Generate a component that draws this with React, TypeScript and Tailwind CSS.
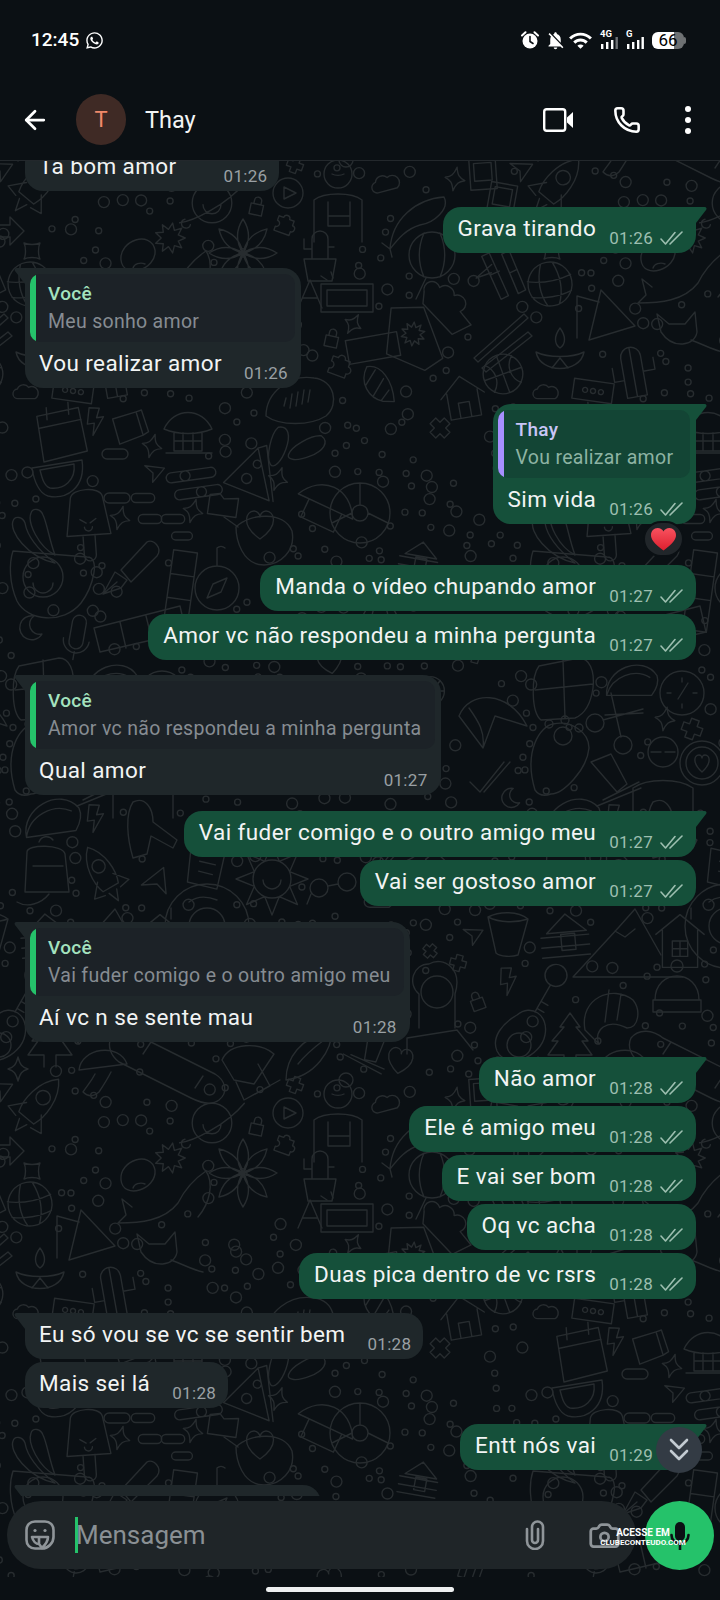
import { ArrowLeft, Camera, Phone } from "lucide-react";
import { FaWhatsapp } from "react-icons/fa";
import { MdNotificationsOff, MdWifi } from "react-icons/md";

const c = (x: number, y: number, r: number) =>
  `M${x - r} ${y}a${r} ${r} 0 1 0 ${2 * r} 0a${r} ${r} 0 1 0 ${-2 * r} 0`;

const petals = (n: number, len: number, w: number) =>
  Array.from({ length: n }, (_, i) => {
    const a = (i * 2 * Math.PI) / n;
    const ex = Math.cos(a) * len;
    const ey = Math.sin(a) * len;
    const nx = -Math.sin(a) * w;
    const ny = Math.cos(a) * w;
    return `M0 0Q${ex / 2 + nx} ${ey / 2 + ny} ${ex} ${ey}Q${ex / 2 - nx} ${ey / 2 - ny} 0 0`;
  }).join("");

const burst = (n: number, r1: number, r2: number) =>
  "M" +
  Array.from({ length: n * 2 }, (_, i) => {
    const a = (i * Math.PI) / n;
    const r = i % 2 ? r2 : r1;
    return `${(Math.cos(a) * r).toFixed(1)} ${(Math.sin(a) * r).toFixed(1)}`;
  }).join("L") +
  "Z";

// doodle shapes, drawn around 0,0 in a box of about 40px
const shapes: Record<string, string> = {
  sparkle: "M0-12C2-4 4-2 10 0C4 2 2 4 0 12C-2 4-4 2-10 0C-4-2-2-4 0-12Z",
  plane: "M-14-7L14-11L3 13L0 0Z",
  cloud: "M-11 7a6 6 0 0 1-1-12a8 8 0 0 1 14-2a7 7 0 0 1 8 14z",
  lock: "M-7-2h14v12h-14zM-4-2v-4a4 4 0 0 1 8 0v4",
  puzzle: "M-10-6h6a4 4 0 0 1 8 0h6v6a4 4 0 0 1 0 8v5h-20v-5a4 4 0 0 0 0-8z",
  pill: "M-8-5h16a5 5 0 0 1 0 10h-16a5 5 0 0 1 0-10z",
  heart: "M0 14C-20 0-14-14-6-14C-2-14 0-11 0-8C0-11 2-14 6-14C14-14 20 0 0 14Z",
  bolt: "M-4-14L6-12L2-3L9-3L-4 14L-1 2L-8 2Z",
  moon: "M4-12A12 12 0 1 0 12 6A10 10 0 0 1 4-12Z",
  burst: burst(9, 19, 11),
  flower: petals(8, 34, 11) + c(0, 0, 4),
  sun: c(0, 0, 19) + "M-9 1a9 9 0 0 0 18 0" + burst(8, 36, 19),
  rocket:
    "M0-28C12-16 12 4 8 14H-8C-12 4-12-16 0-28Z" + c(0, -8, 6) + "M-8 4L-18 16L-8 18M8 4L18 16L8 18M-4 18L0 28L4 18",
  globe: c(0, 0, 22) + "M-22-6C-8-2 8-2 22-6M-20 10C-8 14 8 14 20 10M-6-21C-12-6-12 8-6 21M6-21C12-6 12 8 6 21",
  ball: c(0, 0, 18) + "M-18 0H18M0-18V18M-13-13C-5-6-5 6-13 13M13-13C5-6 5 6 13 13",
  house: "M-20-2L0-20L20-2M-14-6V18H14V-6M-5 18V4H5V18",
  hut: "M-24 0C-14-22 14-22 24 0C10 6-10 6-24 0ZM-14 4V22H14V4M-14 12H14M-5 4V22M5 4V22M-22 24H24",
  polaroid: "M-12-14H12V14H-12ZM-8-10H8V6H-8Z",
  koi: "M-30 30C-28 0-4-20 24-22C30-10 14 4 0 6C-14 10-22 20-30 30ZM-30 30L-38 24M-30 30L-28 38",
  lantern: c(0, 0, 23) + "M-8-22C-14-8-14 8-8 22M8-22C14-8 14 8 8 22M-6 23L-16 44",
  bamboo: "M-14-22L-4 24L4 22L-6-24ZM6-20L14 22L22 20L14-22ZM-9-2L0-4M10 0L18-2M-6-12L-24-2L-8-4",
  whale: "M-38 14L-48 6L-44 22L-52 30C-30 30-6 28 8 10C14-2 24-14 36-22C44-10 40 10 28 24",
  cone: "M-30 20V-22L-8-16M-18 22L-6-28L28 8Z",
  handheart: "M-30-12a8 8 0 0 1 14-8a9 9 0 0 1 16 4a8 8 0 0 1 10 14L24 8L8 22L-28 0Z",
  chop: "M-26 24L24-20L28-16L-22 28ZM-18 34L28-2L32 2L-14 38Z",
  sunlantern: "M-16-30L16-24L24 30L4 38L-30 14ZM-2 8" + burst(10, 12, 7),
  diya: "M-24-2C-20 20 20 20 24-2C12 4-12 4-24-2ZM0-6C-6-10-6-18 0-26C6-18 6-10 0-6ZM-8 14L0 4L8 14",
  fox: "M-22-6L-26-24L-14-14H2L12-26L14-6C12 8-10 12-22-6ZM8 2C24 8 30 12 40 14",
  cactus: "M-10 26V-14a10 10 0 0 1 20 0V26ZM-10 8H-20V-6M10 2H22V-10M0-24V26",
  shell: "M-20-12C-6-20 12-8 22 14L10 18C-6 20-22 8-20-12ZM-10-12L-14 8M2-6L-2 16M12 4L8 18",
  dots: "M-20-10H20V10H-20Z" + c(-8, 0, 2.5) + c(0, 0, 2.5) + c(8, 0, 2.5),
  stars: "M-26-12H26V12H-26Z",
  grandma:
    c(0, -22, 14) + c(8, -36, 7) + "M-6-22a8 4 0 0 0 12 0M-24 46V4C-14-4 14-4 24 4V46M-10 6V30H12V6M-10 20H12",
  potcactus: "M-16 8H16L12 30H-12ZM-8 8V-12a8 8 0 0 1 16 0V8M-8-2H-16V-12M8-4H14",
  clock: "M-26-14H26V14H-26ZM-20-8H20V8H-20ZM-26-22L-20-18M-16-26L-14-20",
  letterA: "M-12 14L0-14L12 14M-7 4H7",
  hutthick: "M-30 6C-16-22 16-22 30 6ZM-18 6V26H18V6",
  wave: "M-34 18C-34-6-10-24 14-20C34-18 40 6 26 18C10 28-20 28-34 18ZM-16 8L-14 0M-10 10L-8-4M-4 8L-2-6M2 6L4-8M8 4L10-8",
  calendar: "M-20-18L22-24L28 20L-16 28ZM-10-26V-14M12-30V-18M-18-6L24-12",
  jar: "M-16-10L10-18L18 8L-8 18ZM10-18L16-20L24 4L18 8",
  slider: "M-20-12H20a5 5 0 0 1 0 10H-20a5 5 0 0 1 0-10Z" + c(-6, -7, 5) + "M-14 6H24a5 5 0 0 1 0 10H-14a5 5 0 0 1 0-10Z" + c(8, 11, 5),
  watermelon: "M-26-8L24-16C28 12 8 24-10 20C-18 18-24 6-26-8ZM-18-6L16-12C18 4 6 14-8 12C-14 10-16 2-18-6Z",
  flipflop: "M-6-20C4-24 8-14 6 0C4 14-2 22-6 18C-12 12-12-12-6-20Z",
  pizza: "M-24 16L4-24L24 26ZM4-24L12-28L28 26" + c(-2, 8, 5) + c(6, -8, 4),
  popsicle: "M-16-24C-14-34 14-34 16-24L22 14H-22ZM-6 14V34a6 6 0 0 0 12 0V14M-8-2L-2 2M8-2L2 2M-4 6a4 4 0 0 0 8 0",
  chili: "M-20-10C-24 0-6 26 22 32C4 18-6 4-8-8C-10-14-18-16-20-10ZM-2-18C-6-8 6 16 22 24C16 8 14-8 10-16C8-22 0-24-2-18Z",
  folder: "M-12-8L-4-10L0-6L12-8V8H-12Z",
  teapot: "M-24-4C-10-18 24-20 32 0C36 20 20 34 4 34C-18 34-24 8-24-4ZM-36-14L-22-4" + "M0 8C-20-6-14-20-6-20C-2-20 0-16 0-14C0-16 2-20 6-20C14-20 20-6 0 8Z",
  wheel: c(0, 0, 30) + c(0, 0, 8) + "M0-8V-30M8 0L28 10M-8 0L-28 10",
  pen: "M-30 30L-18 8L-6 16L-12 24ZM-12 6L14-22C20-26 30-16 24-8L-2 18ZM-30 30L-16 18",
  crossT: "M-12-40H12V40H-12ZM-12-16H12M-12 8H12",
  compass: c(0, 0, 22) + "M-10 10L-4-4L10-10L4 4ZM0-22V-40a6 6 0 0 1 8 0",
  smilecup: "M-44-30L30-24C44-24 36 6 24 22C6 44-30 40-40 20C-48 2-48-18-44-30Z" + c(-14, -4, 20) + "M-24 2a10 10 0 0 0 20 0",
  crossword: "M-46 10L40-12L46 14L-40 34ZM-20 4L-14 30M6-2L12 22",
  mic: "M-7-14a7 7 0 0 1 14 0V6a7 7 0 0 1-14 0ZM-13 4a13 13 0 0 0 26 0M0 16V24",
  calc: "M-24-22L16-30C26-30 32-18 30 0C28 14 22 26 12 30L-22 32C-32 24-32-12-24-22ZM-28 2L30-4M0-28L2 30",
  gauge: c(0, 0, 22) + "M-4 6L6-10M-15 0H-11M0-15V-11M15 0H11M0 15V11",
  scissors: c(-18, 2, 9) + c(10, 24, 9) + "M-10-1L30-12M8 16L-2-28M-8-6L30-8",
  helmet: "M-34-8C-24-34 16-34 34 2L2-8L-10 24L-34-8ZM-24-16C-14-2-8 8-10 24",
  paw: "M-22 36C-34-4-16-28-4-30C14-34 32-22 32-6C30 16 6 40-6 40C-12 42-18 42-22 36Z" + c(6, -18, 9) + c(-8, -30, 4) + c(8, -34, 4) + c(22, -26, 4),
  tube: "M-14-12L6-20L22 10L12 18ZM-2 26L34 8M-8 32L36 14",
  man: c(0, -22, 15) + "M-12-22H-2M2-22H12M-30 44V14C-16 4 16 4 30 14V44",
  ringheart: c(0, 0, 22) + c(0, 0, 16) + "M0 9C-10 0-8-8-3-8C-1-8 0-6 0-5C0-6 1-8 3-8C8-8 10 0 0 9Z",
  checks: "M-20 8L-10 18L14-12M-6 18L20-12",
  cabin: "M-20-6L0-24L20-6ZM-26-2H22M-26 8H22M-26 18H22M-6-4H8V12H-6Z",
  flowerpot: "M-20-16C-8-22 10-22 20-14L10 22C4 24-8 24-12 20ZM-20-16C-8-10 8-10 20-14",
  mountain: "M-50 36L-4-14L12-32L38 14M-8-10L2-4L12-12M-50 36H60",
  cottage: "M-22-6L0-24L22-6M-16-10V24H16V-10M-7 0H7V14H-7ZM0 0V14M-7 7H7M10-20V-30",
  girl: "M-18 30V-4C-30-14-24-34-8-34C6-42 26-30 18-4V30" + c(0, -6, 16) + "M-30 56V40L20 32L36 52",
  beanie: "M-22 12C-22-20 22-20 22 12ZM-24 12H24V24H-24Z" + c(0, -22, 6),
  shrimp: "M-28 16C-34-16 0-30 20-14C28-4 26 14 14 14C-6 4-20 16-14 30L-28 16ZM-4-24L-8 8M8-20L4 6",
  avocado: "M-20 20C-26 6-14-8 0-16C14-28 32-16 28 4C24 26-10 40-20 20Z" + c(2, 14, 12),
  tree: "M-6 26V14H-22L-12 0H-18L-6-14H-10L0-28L10-14H6L18 0H12L22 14H6V26",
  key: c(0, -18, 11) + "M0-7V24M0 12H8M0 20H8",
  taco: "M-26 16C-28-14 14-30 30-6C32 0 30 8 24 16ZM-26 16C-20-6 6-14 22-4",
  flight: "M-14-26C-2-32 6-20 6-6L30 12L26 20L4 8L0 26L-14 30C-20 10-22-14-14-26Z",
  backpack: "M-20-16C-20-24 16-24 18-14L22 24H-22ZM-14-2H16M-8-26a8 8 0 0 1 14-2M-30 34C-20 40-6 36 2 26",
  paper: "M-18-18L16-14L12 20L-18 16ZM-8-6L8-4M-8 4L6 6",
  glasses: c(-14, 0, 9) + c(14, -6, 9) + "M-5-2L5-4M-22 6L-26 16",
  donut: c(0, 0, 42) + c(0, 0, 18) + "M-18-24C-10-30 0-30 10-26",
  mushroom: "M-24 2C-22-20 16-26 24-4ZM-8 6C-12 14-16 18-20 24C-14 30-8 28-4 24C0 18 4 12 8 4",
  snowboard: "M-62-26C-54-36-40-34-30-26L42 10C52 16 56 28 46 36C38 42 26 38 18 34L-54-2C-62-8-66-18-62-26ZM-30-10L-22-22M30 12L22 24",
  drum: "M-28-8C-20-26 10-26 24-14L4 16L-16 12ZM-14 14L-6 32L20 18L8-4M-6 32L30 12",
  surf: "M-24 26C-24 4-10-16 22-24C22-4 6 22-24 26ZM-12 10C-4 0 6-8 14-14",
  arrow: "M-16-6H0V-14L14 0L0 14V6H-16Z",
  egg: "M-16 6C-18-14 14-24 18-4C20 16-14 26-16 6ZM-4 14a8 6 0 0 1 12-4",
  square: "M-8-8C-4-6 4-6 8-8C6-4 6 4 8 8C4 6-4 6-8 8C-6 4-6-4-8-8Z",
  playc: c(0, 0, 15) + "M-4-6L8 0L-4 6Z",
  cross: "M-4-10H4V-4H10V4H4V10H-4V4H-10V-4H-4Z",
  planet: c(0, 0, 22) + "M-10 2a10 10 0 0 0 20 0M-36 22C-20 20 16 2 36-22M-30 18a5 5 0 1 0 6 6",
};

// [shape, x, y, scale, rotation]
const doodles: [string, number, number, number, number][] = [
  ["cloud", 387, 183, 0.9, -15], ["sparkle", 455, 178, 1, 10], ["polaroid", 483, 173, 1.1, -4], ["polaroid", 502, 198, 1.1, 10],
  ["plane", 0, 170, 0.8, 10], ["rocket", 37, 184, 1.2, 40], ["koi", 420, 218, 1, 0],
  ["lantern", 432, 254, 1, 0], ["bamboo", 500, 274, 1, -12], ["globe", 30, 283, 1, -10], ["whale", 170, 272, 1, 0],
  ["playc", 288, 192, 1, 0], ["lock", 257, 205, 0.9, 12], ["puzzle", 285, 222, 0.8, 20], ["grandma", 338, 195, 1, 0],
  ["potcactus", 320, 250, 1, 0], ["flower", 243, 252, 1, 0], ["burst", 170, 237, 0.8, 0], ["planet", 212, 202, 0.9, 0],
  ["square", 32, 250, 1, 0], ["egg", 137, 253, 1, 0], ["arrow", 10, 230, 1, 0],
  ["handheart", 450, 310, 1, 15], ["chop", 500, 333, 1, 0], ["sunlantern", 413, 333, 1, -12], ["diya", 40, 353, 1, 0],
  ["fox", 163, 337, 1, 0], ["cactus", 113, 370, 1, -10], ["ball", 503, 373, 1.1, -20], ["house", 463, 397, 1.1, -10],
  ["shell", 380, 382, 0.9, 20], ["stars", 373, 347, 1, -10], ["dots", 73, 390, 1, 8], ["cloud", 27, 392, 0.8, 0],
  ["cross", 440, 427, 1, 45], ["clock", 347, 297, 1, 0], ["letterA", 310, 293, 1, 0], ["sparkle", 353, 323, 0.9, 30],
  ["lock", 332, 337, 0.9, 12], ["puzzle", 340, 363, 0.9, 20], ["wave", 300, 397, 1, 0], ["cone", 87, 317, 1, 0],
  ["calendar", 58, 432, 1, -4], ["bolt", 95, 420, 1, -8], ["jar", 127, 427, 0.9, 0], ["pill", 115, 453, 1, 0],
  ["sparkle", 152, 445, 1, 15], ["hut", 188, 428, 1, 0], ["flipflop", 280, 447, 1, 12], ["flipflop", 307, 450, 1, 60],
  ["pizza", 250, 470, 1, 10], ["watermelon", 58, 475, 1, 0], ["slider", 192, 481, 1, -8], ["plane", 153, 472, 0.7, 15],
  ["sparkle", 278, 478, 1, 20], ["pill", 117, 497, 1, 0], ["pill", 143, 497, 0.9, 0], ["popsicle", 88, 520, 1, -4],
  ["chili", 33, 530, 1, 0], ["sparkle", 120, 517, 1, 15], ["sparkle", 193, 510, 1, 15], ["folder", 223, 505, 1.2, 8],
  ["teapot", 260, 530, 1, 0], ["pill", 150, 518, 0.9, 0], ["pill", 173, 518, 0.9, 0], ["pill", 182, 535, 0.8, 0],
  ["wheel", 360, 512, 1, 0], ["hutthick", 328, 500, 1, 25], ["pen", 133, 563, 1, 0], ["crossT", 180, 590, 1, 8],
  ["smilecup", 57, 580, 1, 0], ["compass", 217, 587, 1, 0], ["crossword", 140, 617, 1, 0], ["moon", 30, 627, 1, 0],
  ["mic", 77, 635, 1, 10], ["calc", 43, 687, 1, 0], ["taco", 110, 680, 0.9, 0], ["gauge", 162, 692, 1, 0],
  ["scissors", 93, 720, 1, 0], ["helmet", 493, 723, 1, 0], ["paw", 37, 753, 1, 0], ["man", 143, 773, 1, 0],
  ["tube", 85, 773, 1, 0], ["ringheart", 182, 762, 1, 0], ["checks", 490, 773, 1, 0], ["moon", 510, 797, 0.8, 0],
  ["sparkle", 145, 718, 1, 10], ["cross", 172, 728, 1, 20], ["taco", 50, 817, 1, -8], ["bolt", 95, 817, 1, -8],
  ["flight", 147, 827, 1, 0], ["backpack", 47, 867, 1, 0], ["rocket", 103, 873, 1.1, -30], ["plane", 157, 883, 1, -30],
  ["paper", 207, 867, 1, 6], ["sun", 272, 878, 1, 0], ["glasses", 333, 887, 1, 0], ["donut", 207, 925, 1, 0],
  ["mountain", 103, 940, 1, 0], ["cottage", 160, 940, 1.1, 0], ["cabin", 47, 937, 1, -5], ["flowerpot", 508, 932, 1, 0],
  ["plane", 472, 935, 0.7, 10], ["cross", 458, 962, 0.8, 15], ["cross", 430, 950, 0.7, 40], ["girl", 437, 997, 1, 0],
  ["beanie", 157, 987, 1, 0], ["shrimp", 93, 1013, 1, 0], ["avocado", 517, 1030, 1, 0], ["tree", 50, 1040, 1, 0],
  ["key", 27, 990, 1, 30], ["bolt", 508, 980, 1, -12], ["lock", 477, 1000, 0.9, -20], ["mushroom", 103, 1067, 1, 0],
  ["snowboard", 173, 1063, 1, 0], ["drum", 250, 1067, 1, 0], ["surf", 310, 1053, 1, 0], ["sparkle", 18, 1068, 1, 0],
  ["cross", 295, 1084, 0.8, 20], ["sparkle", 330, 1000, 1, 0], ["pill", 362, 960, 0.8, 30], ["cloud", 380, 900, 0.9, 0],
  ["tube", 370, 1040, 0.9, 50], ["chili", 400, 850, 0.8, 80], ["heart", 400, 1060, 0.9, 10], ["pen", 440, 860, 0.8, 90],
  ["globe", 380, 620, 0.8, 0], ["cabin", 420, 560, 0.8, 10], ["bamboo", 470, 640, 0.8, 30], ["heart", 330, 660, 0.9, -10],
  ["ball", 430, 690, 0.8, 0], ["moon", 370, 740, 0.9, 30], ["cloud", 300, 760, 0.9, 0], ["wave", 280, 830, 0.8, 20],
];

const dotSeed = () => {
  const out: [number, number, number][] = [];
  let s = 17;
  const next = () => {
    s = (s * 9301 + 49297) % 233280;
    return s / 233280;
  };
  for (let y = 165; y < 1080; y += 15) {
    for (let x = 4; x < 520; x += 22) {
      const px = x + next() * 14;
      const py = y + next() * 10;
      const clear = doodles.every(([, dx, dy, sc]) => Math.hypot(dx - px, dy - py) > 27 * sc);
      if (clear && next() > 0.35) out.push([px, py, next() > 0.6 ? 5.5 : 3]);
    }
  }
  return out;
};

const dots = dotSeed();

const Wallpaper = () => {
  const tile = (
    <g>
      {doodles.map(([name, x, y, sc, rot], i) => (
        <path key={i} d={shapes[name]} transform={`translate(${x} ${y - 160}) rotate(${rot}) scale(${sc})`} vectorEffect="non-scaling-stroke" />
      ))}
      {dots.map(([x, y, r], i) => (
        <circle key={i} cx={x} cy={y - 160} r={r} />
      ))}
    </g>
  );
  const offsets = [-520, 0, 520];
  return (
    <svg className="absolute inset-0 h-full w-full" fill="none" stroke="#272c2f" strokeWidth="1.4" strokeLinejoin="round" strokeLinecap="round">
      {offsets.map((dx) =>
        [-920, 0, 920].map((dy) => (
          <g key={`${dx}-${dy}`} transform={`translate(${dx} ${dy})`}>
            {tile}
          </g>
        )),
      )}
    </svg>
  );
};

const Ticks = () => (
  <svg width="23" height="14" viewBox="0 0 23 14" fill="none" stroke="#9dbfb0" strokeWidth="1.6" strokeLinecap="round" strokeLinejoin="round">
    <path d="M1 8l4.5 5L15 1.5" />
    <path d="M10 13L22 1" />
  </svg>
);

const OutTail = () => (
  <svg className="absolute left-full top-0" width="11" height="16" viewBox="0 0 11 16">
    <path d="M0 0H8.5C10.5 0 11 1.6 10 3L0 16Z" fill="#15503a" />
  </svg>
);

const InTail = () => (
  <svg className="absolute right-full top-0" width="11" height="16" viewBox="0 0 11 16">
    <path d="M11 0H2.5C.5 0 0 1.6 1 3L11 16Z" fill="#1f272a" />
  </svg>
);

type Msg = {
  text: string;
  time: string;
  out?: boolean;
  tail?: boolean;
  mt: string;
  gap?: string;
  reply?: { who: string; text: string };
  reaction?: boolean;
};

const messages: Msg[] = [
  { text: "Ta bom amor", time: "01:26", mt: "mt-[-16px]", gap: "ml-[47px]" },
  { text: "Grava tirando", time: "01:26", out: true, tail: true, mt: "mt-[16px]" },
  { text: "Vou realizar amor", time: "01:26", tail: true, mt: "mt-[15px]", reply: { who: "Você", text: "Meu sonho amor" } },
  { text: "Sim vida", time: "01:26", out: true, tail: true, mt: "mt-[16px]", reply: { who: "Thay", text: "Vou realizar amor" }, reaction: true },
  { text: "Manda o vídeo chupando amor", time: "01:27", out: true, mt: "mt-[41px]" },
  { text: "Amor vc não respondeu a minha pergunta", time: "01:27", out: true, mt: "mt-[3px]" },
  { text: "Qual amor", time: "01:27", tail: true, mt: "mt-[15px]", reply: { who: "Você", text: "Amor vc não respondeu a minha pergunta" } },
  { text: "Vai fuder comigo e o outro amigo meu", time: "01:27", out: true, tail: true, mt: "mt-[16px]" },
  { text: "Vai ser gostoso amor", time: "01:27", out: true, mt: "mt-[3px]" },
  { text: "Aí vc n se sente mau", time: "01:28", tail: true, mt: "mt-[16px]", reply: { who: "Você", text: "Vai fuder comigo e o outro amigo meu" } },
  { text: "Não amor", time: "01:28", out: true, tail: true, mt: "mt-[15px]" },
  { text: "Ele é amigo meu", time: "01:28", out: true, mt: "mt-[3px]" },
  { text: "E vai ser bom", time: "01:28", out: true, mt: "mt-[3px]" },
  { text: "Oq vc acha", time: "01:28", out: true, mt: "mt-[3px]" },
  { text: "Duas pica dentro de vc rsrs", time: "01:28", out: true, mt: "mt-[3px]" },
  { text: "Eu só vou se vc se sentir bem", time: "01:28", tail: true, mt: "mt-[14px]" },
  { text: "Mais sei lá", time: "01:28", mt: "mt-[3px]" },
  { text: "Entt nós vai", time: "01:29", out: true, tail: true, mt: "mt-[16px]" },
];

const Line = ({ m }: { m: Msg }) => (
  <div className={`flex h-[46px] items-start justify-between ${m.reply ? (m.out ? "pl-[10px] pr-[7px]" : "pl-[9px] pr-[7px]") : ""}`}>
    <span className="mt-[8px] whitespace-nowrap text-[22.5px] leading-[26px] tracking-[0.4px] text-[#f2f4f4]">{m.text}</span>
    <span className={`mt-[21px] flex items-center whitespace-nowrap text-[17px] leading-[20px] tracking-[0.3px] ${m.out ? "ml-[13px] gap-[7px] text-[#9dbfb0]" : `${m.gap ?? "ml-[22px]"} text-[#9aa0a4]`}`}>
      {m.time}
      {m.out && <Ticks />}
    </span>
  </div>
);

const Bubble = ({ m }: { m: Msg }) => (
  <div className={`flex ${m.out ? "justify-end pr-[24px]" : "justify-start pl-[25px]"} ${m.mt}`}>
    <div
      className={`relative rounded-[18px] ${m.out ? "bg-[#15503a]" : "bg-[#1f272a]"} ${m.tail ? (m.out ? "rounded-tr-none" : "rounded-tl-none") : ""} ${
        m.reply ? "pl-[5px] pr-[6px] pt-[6px]" : m.out ? "pl-[15px] pr-[13px]" : "pl-[14px] pr-[12px]"
      }`}
    >
      {m.tail && (m.out ? <OutTail /> : <InTail />)}
      {m.reply && (
        <div className={`flex h-[68px] overflow-hidden rounded-[10px] ${m.out ? "bg-[#134535]" : "bg-[#1c2227]"}`}>
          <div className={`w-[6px] shrink-0 ${m.out ? "bg-[#a78fff]" : "bg-[#25c26a]"}`} />
          <div className="pl-[12px] pr-[13px]">
            <div className={`mt-[8px] text-[19px] font-medium leading-[24px] tracking-[0.3px] ${m.out ? "text-[#c9c6f7]" : "text-[#a4e3bf]"}`}>{m.reply.who}</div>
            <div className={`mt-[4px] whitespace-nowrap text-[19.5px] leading-[24px] tracking-[0.3px] ${m.out ? "text-[#8db3a3]" : "text-[#868c92]"}`}>{m.reply.text}</div>
          </div>
        </div>
      )}
      <Line m={m} />
      {m.reaction && (
        <div className="absolute right-[12px] top-[117px] flex h-[36px] w-[41px] items-center justify-center rounded-full border-2 border-[#0b1014] bg-[#21262a]">
          <svg width="25" height="23" viewBox="0 0 25 23">
            <defs>
              <linearGradient id="heartFill" x1="0" y1="0" x2="0" y2="1">
                <stop offset="0" stopColor="#f9525f" />
                <stop offset="1" stopColor="#dc1f2e" />
              </linearGradient>
            </defs>
            <path d="M12.5 22.5C3 15.5 0 11.5 0 7C0 3 3 0 6.6 0C9.2 0 11.4 1.3 12.5 3.6C13.6 1.3 15.8 0 18.4 0C22 0 25 3 25 7C25 11.5 22 15.5 12.5 22.5Z" fill="url(#heartFill)" />
          </svg>
        </div>
      )}
    </div>
  </div>
);

const SignalBars = ({ label, dim }: { label: string; dim?: boolean }) => (
  <div className="relative h-[18px] w-[18px]">
    <span className="absolute left-0 top-[-3px] text-[9.5px] font-bold leading-[11px] text-white">{label}</span>
    <svg className="absolute bottom-0 left-0" width="18" height="18" viewBox="0 0 18 18" fill="#fff">
      <rect x="1" y="13" width="2.4" height="5" />
      <rect x="6" y="11" width="2.4" height="7" />
      <rect x="11" y="9" width="2.4" height="9" />
      <rect x="15.5" y="6" width="2.4" height="12" fill={dim ? "#6f7376" : "#fff"} />
    </svg>
  </div>
);

const AlarmIcon = () => (
  <svg width="18" height="18" viewBox="0 0 18 18" fill="none">
    <circle cx="9" cy="10" r="7.5" fill="#fff" />
    <path d="M9 5.5V10.5L12 12.5" stroke="#0b1014" strokeWidth="1.6" strokeLinecap="round" />
    <path d="M1 4.5L4.5 1.2M17 4.5L13.5 1.2" stroke="#fff" strokeWidth="2" strokeLinecap="round" />
  </svg>
);

const StatusBar = () => (
  <div className="flex h-[80px] items-start px-[31px] pt-[27px]">
    <span className="text-[19px] font-medium leading-[26px] text-white">12:45</span>
    <FaWhatsapp className="ml-[6px] mt-[4px] text-white" size={19} />
    <div className="ml-auto mr-[3px] flex items-center pt-[1px]">
      <AlarmIcon />
      <MdNotificationsOff className="ml-[6px] text-white" size={21} />
      <div className="relative ml-[2px] h-[24px] w-[26px]">
        <MdWifi className="text-white" size={25} />
      </div>
      <div className="ml-[6px]">
        <SignalBars label="4G" dim />
      </div>
      <div className="ml-[8px]">
        <SignalBars label="G" />
      </div>
      <div className="ml-[8px] flex items-center">
        <div className="flex h-[17px] w-[32px] items-center justify-center rounded-[6px] bg-[linear-gradient(90deg,#fff_68%,#6e7173_68%)] text-[17px] leading-none text-black">
          66
        </div>
        <div className="h-[7px] w-[2px] rounded-r-sm bg-[#6e7173]" />
      </div>
    </div>
  </div>
);

const Header = () => (
  <div className="flex h-[81px] items-center border-b border-[#23282c] pb-[1px]">
    <ArrowLeft className="ml-[20px] text-white" size={30} strokeWidth={2.2} />
    <div className="ml-[26px] flex h-[51px] w-[50px] items-center justify-center rounded-full bg-[#3f2a25] text-[22px] text-[#f0896a]">T</div>
    <span className="ml-[19px] text-[23.5px] leading-[30px] text-[#f2f4f4]">Thay</span>
    <svg className="ml-auto" width="30" height="24" viewBox="0 0 30 24" fill="none">
      <rect x="1.2" y="1.2" width="21" height="21.6" rx="2.5" stroke="#fff" strokeWidth="2.4" />
      <path d="M24 9.5L30 4V20L24 14.5Z" fill="#fff" />
    </svg>
    <Phone className="ml-[40px] text-white" size={28} strokeWidth={2.2} />
    <div className="ml-[44px] mr-[29px] flex flex-col gap-[5px]">
      <div className="h-[6px] w-[6px] rounded-full bg-white" />
      <div className="h-[6px] w-[6px] rounded-full bg-white" />
      <div className="h-[6px] w-[6px] rounded-full bg-white" />
    </div>
  </div>
);

const InputRow = () => (
  <div className="relative z-10 flex items-start pl-[7px] pt-[5px]">
    <div className="flex h-[68px] w-[629px] items-center rounded-full bg-[#1f2528]">
      <svg className="ml-[18px]" width="30" height="30" viewBox="0 0 30 30" fill="none" stroke="#8f9599" strokeWidth="2.6" strokeLinejoin="round" strokeLinecap="round">
        <path d="M10 1.5H20C25 1.5 28.5 5 28.5 10V17C28.5 23 23 28.5 17 28.5H10C5 28.5 1.5 25 1.5 20V10C1.5 5 5 1.5 10 1.5Z" />
        <path d="M7 17H23C23 20 21 24 17 28L14 24C11 24 8 21 7 17Z" />
        <path d="M14 18V23" />
        <circle cx="10" cy="10.5" r="1.6" fill="#8f9599" stroke="none" />
        <circle cx="20" cy="10.5" r="1.6" fill="#8f9599" stroke="none" />
      </svg>
      <div className="ml-[20px] h-[36px] w-[3px] bg-[#25c26a]" />
      <span className="ml-[-2px] text-[26px] leading-[36px] text-[#8a9094]">Mensagem</span>
      <svg className="ml-auto" width="20" height="30" viewBox="0 0 20 30" fill="none" stroke="#8f9599" strokeWidth="2.6" strokeLinecap="round">
        <path d="M2 9V21A8 8 0 0 0 18 21V7A5.5 5.5 0 0 0 7 7V20A3 3 0 0 0 13 20V9" />
      </svg>
      <Camera className="ml-[43px] mr-[15px] text-[#8f9599]" size={33} strokeWidth={2} />
    </div>
    <div className="ml-[9px] flex h-[69px] w-[69px] items-center justify-center rounded-full bg-[#25c26a]">
      <svg width="20" height="28" viewBox="0 0 20 28" fill="none">
        <rect x="5" y="0" width="10" height="19" rx="5" fill="#0b1014" />
        <path d="M1.5 13A8.5 8.5 0 0 0 18.5 13" stroke="#0b1014" strokeWidth="2.6" strokeLinecap="round" />
        <path d="M10 22V28" stroke="#0b1014" strokeWidth="2.6" />
      </svg>
    </div>
    <div className="absolute left-[600px] top-[31px] w-[86px] text-center font-bold text-white">
      <div className="text-[10px] leading-[11px]">ACESSE EM</div>
      <div className="text-[8px] leading-[9px]">CLUBECONTEUDO.COM</div>
    </div>
  </div>
);

export default function App() {
  return (
    <div className="flex h-[1600px] w-[720px] flex-col overflow-hidden bg-[#0b1014] font-['Roboto',sans-serif]">
      <StatusBar />
      <Header />
      <div className="relative flex h-[1416px] flex-col">
        <Wallpaper />
        <div className="relative h-[1335px] overflow-hidden">
          {messages.map((m) => (
            <Bubble key={m.text} m={m} />
          ))}
          <div className="relative ml-[25px] mt-[15px] h-[46px] w-[296px] rounded-[18px] rounded-tl-none bg-[#1f272a]">
            <InTail />
          </div>
          <div className="absolute left-[656px] top-[1266px] flex h-[46px] w-[46px] items-center justify-center rounded-full bg-[#333b44]">
            <svg width="22" height="26" viewBox="0 0 22 26" fill="none" stroke="#c3cbd2" strokeWidth="2.6" strokeLinecap="round" strokeLinejoin="round">
              <path d="M3 3L11 11L19 3" />
              <path d="M3 14L11 22L19 14" />
            </svg>
          </div>
        </div>
        <InputRow />
      </div>
      <div className="flex flex-1 justify-center bg-[#0b1014] pt-[10px]">
        <div className="h-[5px] w-[188px] rounded-full bg-[#eef0f1]" />
      </div>
    </div>
  );
}
